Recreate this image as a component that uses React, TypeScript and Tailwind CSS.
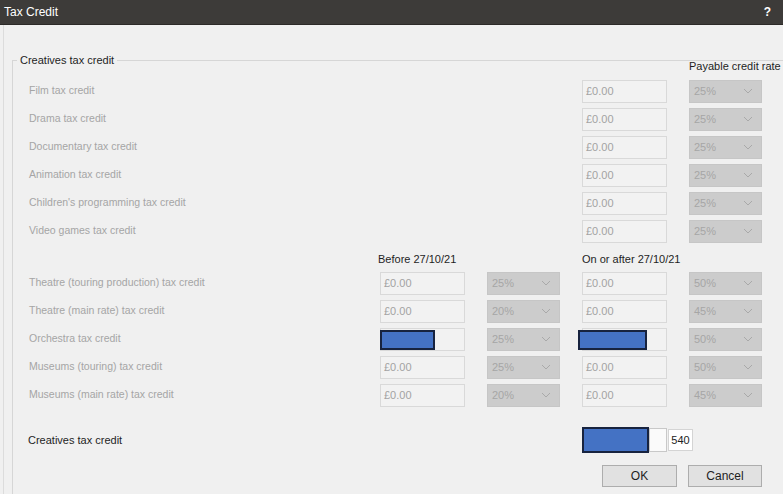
import React from "react"

type Row = { label: string; before?: string; after?: string; redacted?: boolean }

const topRows: Row[] = [
  { label: "Film tax credit", after: "25%" },
  { label: "Drama tax credit", after: "25%" },
  { label: "Documentary tax credit", after: "25%" },
  { label: "Animation tax credit", after: "25%" },
  { label: "Children's programming tax credit", after: "25%" },
  { label: "Video games tax credit", after: "25%" },
]

const theatreRows: Row[] = [
  { label: "Theatre (touring production) tax credit", before: "25%", after: "50%" },
  { label: "Theatre (main rate) tax credit", before: "20%", after: "45%" },
  { label: "Orchestra tax credit", before: "25%", after: "50%", redacted: true },
  { label: "Museums (touring) tax credit", before: "25%", after: "50%" },
  { label: "Museums (main rate) tax credit", before: "20%", after: "45%" },
]

function Chevron() {
  return (
    <svg width="10" height="6" viewBox="0 0 10 6" fill="none" className="mr-[8px]">
      <path d="M1 1 L5 5 L9 1" stroke="#a9a9a9" strokeWidth="1" />
    </svg>
  )
}

function Money({ redacted, shift }: { redacted?: boolean; shift?: boolean }) {
  return (
    <div className="relative h-[23px] w-[85px] border border-[#d9d9d9] bg-[#f2f2f2] pl-[3px] flex items-center text-[11px] text-[#a3a3a3]">
      {redacted ? (
        <div
          className={
            shift
              ? "absolute -left-[5px] top-[1px] h-[20px] w-[69px] bg-[#4472c4] border-2 border-[#17233f]"
              : "absolute -left-[1px] top-[1px] h-[20px] w-[55px] bg-[#4472c4] border-2 border-[#17233f]"
          }
        />
      ) : (
        "£0.00"
      )}
    </div>
  )
}

function Rate({ value }: { value: string }) {
  return (
    <div className="h-[23px] w-[73px] border border-[#c6c6c6] bg-[#cccccc] pl-[4px] flex items-center justify-between text-[11px] text-[#a6a6a6]">
      <span>{value}</span>
      <Chevron />
    </div>
  )
}

function CreditRow({ row }: { row: Row }) {
  return (
    <div className="grid h-[28px] grid-cols-[329px_85px_73px_85px_73px] gap-x-[22px] items-center">
      <span className="text-[10.5px] text-[#a5a5a5] whitespace-nowrap">{row.label}</span>
      {row.before ? <Money redacted={row.redacted} /> : <div />}
      {row.before ? <Rate value={row.before} /> : <div />}
      <Money redacted={row.redacted} shift />
      <Rate value={row.after ?? "25%"} />
    </div>
  )
}

export default function App() {
  return (
    <div className="w-[783px] h-[494px] overflow-hidden bg-[#f0f0f0] flex flex-col font-['Liberation_Sans',Arial,sans-serif]">
      <div className="h-[25px] shrink-0 bg-[#3d3b39] border-b border-[#2c2a28] flex items-center justify-between pl-[4px] pr-[12px] text-[12px] text-white">
        <span>Tax Credit</span>
        <span className="font-bold">?</span>
      </div>

      <div className="flex-1 pl-[3px]">
        <div className="h-full border-l border-[#dcdcdc] pl-[8px] pt-[28px]">
          <fieldset className="h-[460px] border-t border-l border-[#d6d6d6] pl-[16px]">
            <legend className="-ml-[12px] px-[3px] text-[11px] leading-[14px] text-[#1e1e1e]">
              Creatives tax credit
            </legend>

            <div className="w-[733px]">
              <div className="-mt-[10px] h-[18px] flex items-center justify-end text-[11px] text-[#1e1e1e]">
                <span className="w-[90px] whitespace-nowrap -mr-[17px]">Payable credit rate</span>
              </div>

              <div className="mt-[2px]">
                {topRows.map((r) => (
                  <CreditRow key={r.label} row={r} />
                ))}
              </div>

              <div className="h-[24px] pt-[4px] grid grid-cols-[329px_85px_73px_85px_73px] gap-x-[22px] items-center text-[11px] text-[#1e1e1e]">
                <div />
                <span className="-ml-[2px] whitespace-nowrap">Before 27/10/21</span>
                <div />
                <span className="whitespace-nowrap">On or after 27/10/21</span>
                <div />
              </div>

              <div>
                {theatreRows.map((r) => (
                  <CreditRow key={r.label} row={r} />
                ))}
              </div>

              <div className="mt-[17px] h-[28px] grid grid-cols-[329px_85px_73px_85px_73px] gap-x-[22px] items-center">
                <span className="-ml-[1px] text-[11px] text-[#1e1e1e]">Creatives tax credit</span>
                <div />
                <div />
                <div className="flex items-center">
                  <div className="h-[26px] w-[67px] shrink-0 bg-[#4472c4] border-2 border-[#17233f]" />
                  <div className="h-[24px] w-[18px] shrink-0 bg-[#fafafa] border border-[#c8c8c8]" />
                  <div className="ml-[1px] h-[22px] w-[25px] shrink-0 bg-white border border-[#d4d4d4] flex items-center justify-center text-[11px] text-[#222]">
                    540
                  </div>
                </div>
                <div />
              </div>

              <div className="mt-[11px] flex justify-end gap-[11px]">
                <button className="h-[22px] w-[75px] border border-[#adadad] bg-[#e1e1e1] text-[12px] text-[#1e1e1e]">
                  OK
                </button>
                <button className="h-[22px] w-[74px] border border-[#adadad] bg-[#e1e1e1] text-[12px] text-[#1e1e1e]">
                  Cancel
                </button>
              </div>
            </div>
          </fieldset>
        </div>
      </div>
    </div>
  )
}
